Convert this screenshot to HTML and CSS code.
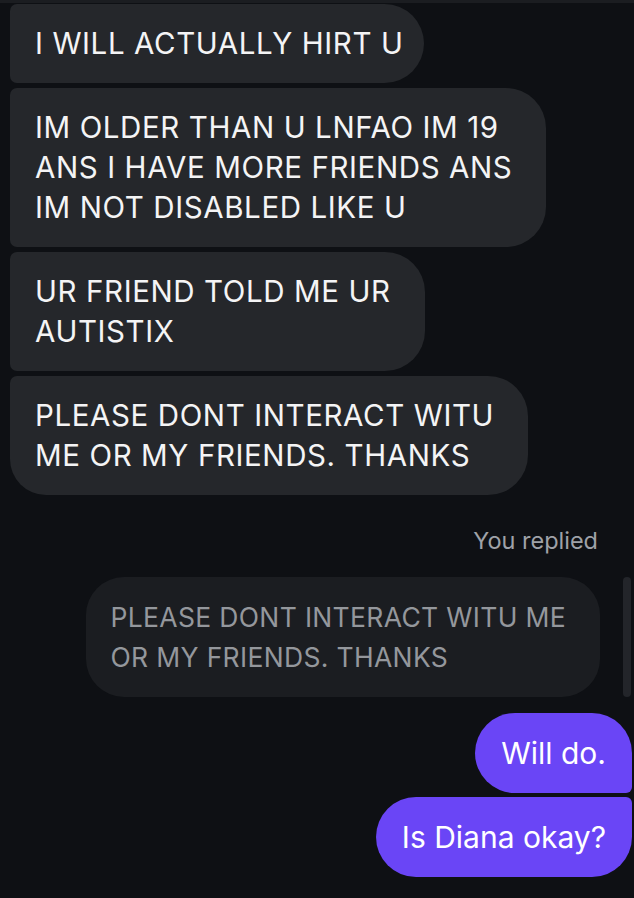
FILE: index.html
```html
<!DOCTYPE html>
<html lang="en">
<head>
<meta charset="utf-8">
<title>Chat</title>
<link rel="stylesheet" href="styles.css">
</head>
<body>
<div class="top-edge"></div>
<div class="thread">
  <div class="incoming">
    <div class="bubble in tight">I WILL ACTUALLY HIRT U</div>
    <div class="bubble in">IM OLDER THAN U LNFAO IM 19<br>ANS I HAVE MORE FRIENDS ANS<br>IM NOT DISABLED LIKE U</div>
    <div class="bubble in">UR FRIEND TOLD ME UR<br>AUTISTIX</div>
    <div class="bubble in last">PLEASE DONT INTERACT WITU<br>ME OR MY FRIENDS. THANKS</div>
  </div>
  <div class="replied-label">You replied</div>
  <div class="reply-row">
    <div class="reply-quote">PLEASE DONT INTERACT WITU ME<br>OR MY FRIENDS. THANKS</div>
    <div class="scrollbar"></div>
  </div>
  <div class="outgoing">
    <div class="bubble out first">Will do.</div>
    <div class="bubble out last">Is Diana okay?</div>
  </div>
</div>
</body>
</html>
```
FILE: styles.css
```css
html, body {
  margin: 0;
  padding: 0;
  background: #0e1014;
}
body {
  width: 634px;
  height: 898px;
  overflow: hidden;
  font-family: Inter, "Noto Sans", "Liberation Sans", sans-serif;
  font-weight: 380;
  -webkit-font-smoothing: antialiased;
}
.top-edge {
  height: 3px;
  background: #1b1d21;
}
.thread {
  display: flex;
  flex-direction: column;
  padding-top: 1px;
}
.incoming {
  display: flex;
  flex-direction: column;
  align-items: flex-start;
  gap: 5px;
  padding-left: 10px;
}
.bubble {
  line-height: 40px;
  white-space: nowrap;
}
.bubble.in {
  font-size: 29.5px;
  letter-spacing: 0.6px;
  padding: 19px 34px 20px 25px;
  background: #25272b;
  color: #f4f4f5;
  border-radius: 7px 40px 40px 7px;
}
.bubble.in.tight {
  padding-right: 20px;
}
.bubble.in.last {
  border-radius: 7px 40px 40px 36px;
}
.replied-label {
  align-self: flex-end;
  margin-top: 31px;
  padding-right: 36px;
  font-size: 23.5px;
  letter-spacing: 0;
  line-height: 30px;
  color: #9fa2a8;
}
.reply-row {
  position: relative;
  display: flex;
  justify-content: flex-end;
  margin-top: 21px;
  padding-right: 34px;
}
.reply-quote {
  background: #1b1d21;
  color: #94979c;
  font-size: 26.5px;
  letter-spacing: 0.33px;
  line-height: 40px;
  padding: 20px 34px 20px 25px;
  border-radius: 38px;
  white-space: nowrap;
}
.scrollbar {
  position: absolute;
  right: 3px;
  top: 0;
  bottom: 0;
  width: 8px;
  border-radius: 4px;
  background: #23252a;
}
.outgoing {
  display: flex;
  flex-direction: column;
  align-items: flex-end;
  gap: 4px;
  margin-top: 16px;
  padding-right: 2px;
}
.bubble.out {
  background: #6a45f6;
  color: #ffffff;
  font-size: 30px;
  padding: 20px 26px;
}
.bubble.out.first {
  border-radius: 40px 40px 6px 40px;
}
.bubble.out.last {
  border-radius: 40px 6px 40px 40px;
}
```
